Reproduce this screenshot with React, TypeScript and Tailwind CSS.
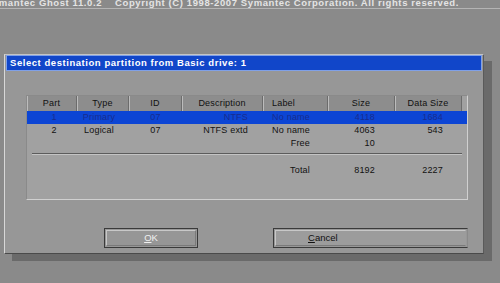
const cols = "grid grid-cols-[50px_52px_53px_81px_65px_67px_67px]";
const font = { fontFamily: '"Liberation Sans", Arial, sans-serif' };

const rows = [
  { part: "1", type: "Primary", id: "07", desc: "NTFS", label: "No name", size: "4118", data: "1684", sel: true },
  { part: "2", type: "Logical", id: "07", desc: "NTFS extd", label: "No name", size: "4063", data: "543" },
  { part: "", type: "", id: "", desc: "", label: "Free", size: "10", data: "" },
];

function Row({ r }: { r: { part: string; type: string; id: string; desc: string; label: string; size: string; data: string; sel?: boolean } }) {
  return (
    <div className={`${cols} h-[13px] items-center text-[9px] leading-none tracking-[0.2px] ${r.sel ? "text-[#182c8e]" : "text-[#111]"}`}>
      <span className="text-center pl-[4px]">{r.part}</span>
      <span className="text-center pr-[8px]">{r.type}</span>
      <span className="text-center">{r.id}</span>
      <span className="text-right pr-[15px]">{r.desc}</span>
      <span className="text-right pr-[18px]">{r.label}</span>
      <span className="text-right pr-[20px]">{r.size}</span>
      <span className="text-right pr-[19px]">{r.data}</span>
    </div>
  );
}

export default function App() {
  const heads = ["Part", "Type", "ID", "Description", "Label", "Size", "Data Size"];
  return (
    <div className="w-[500px] h-[283px] bg-[#8a8a8a] overflow-hidden flex flex-col" style={font}>
      {/* Ghost header line */}
      <div className="h-[9px] overflow-hidden whitespace-nowrap border-b border-[#b4b4b4]">
        <div className="-mt-[2px] -ml-[14px] text-[9.5px] font-bold leading-[10px] text-[#e4e4e4] tracking-[0.6px]">
          Symantec Ghost 11.0.2&nbsp;&nbsp;&nbsp; Copyright (C) 1998-2007 Symantec Corporation. All rights reserved.
        </div>
      </div>

      {/* Dialog */}
      <div className="mt-[45px] ml-[4px] w-[480px] h-[200px] bg-[#979797] border border-l-[#d8d8d8] border-t-[#c4c4c4] border-r-[#5a5a5a] border-b-[#4a4a4a] shadow-[8px_7px_0_#6a6a6a] flex flex-col">
        <div className="mx-[1px] h-[16px] bg-[#1146c9] border border-[#7fa0e8] flex items-center pl-[3px]">
          <span className="text-[9.5px] font-bold text-white tracking-[0.55px] leading-none">
            Select destination partition from Basic drive: 1
          </span>
        </div>

        {/* Table panel */}
        <div className="mt-[24px] ml-[21px] w-[442px] h-[105px] bg-[#a1a1a1] border border-t-[#8a8a8a] border-l-[#8a8a8a] border-r-[#d0d0d0] border-b-[#d0d0d0] flex flex-col">
          <div className={`${cols} h-[15px] w-[435px] bg-[#8d8d8d] text-[9px] text-[#111] leading-none tracking-[0.2px]`}>
            {heads.map((h, i) => (
              <span
                key={h}
                className={`flex items-center border-r border-[#6c6c6c] shadow-[inset_1px_0_0_#bcbcbc] ${
                  i === 4 ? "pl-[9px]" : "justify-center"
                }`}
              >
                {h}
              </span>
            ))}
          </div>
          <div className="bg-[#0c45d4]">
            <Row r={rows[0]} />
          </div>
          <Row r={rows[1]} />
          <Row r={rows[2]} />
          <div className="mt-[3px] ml-[5px] w-[430px] h-[2px] border-t border-[#5c5c5c] border-b border-b-[#c4c4c4]" />
          <div className="mt-[9px]">
            <Row r={{ part: "", type: "", id: "", desc: "", label: "Total", size: "8192", data: "2227" }} />
          </div>
        </div>

        {/* Buttons */}
        <div className="mt-[28px] flex">
          <div className="ml-[99px] w-[94px] h-[20px] border border-[#3a3a3a] p-[1px]">
            <div className="h-full border border-[#c8c8c8] border-r-[#7a7a7a] border-b-[#7a7a7a] bg-[#969696] flex items-center justify-center">
              <span className="text-[9.5px] text-[#f0f0f0] leading-none">
                <u>O</u>K
              </span>
            </div>
          </div>
          <div className="ml-[75px] w-[195px] h-[20px] border border-[#3a3a3a] border-r-[#8a8a8a] p-[1px]">
            <div className="h-full border border-[#c8c8c8] border-r-transparent border-b-[#7a7a7a] bg-[#9c9c9c] flex items-center pl-[32px]">
              <span className="text-[9.5px] text-[#111] leading-none">
                <u>C</u>ancel
              </span>
            </div>
          </div>
        </div>
      </div>
    </div>
  );
}
